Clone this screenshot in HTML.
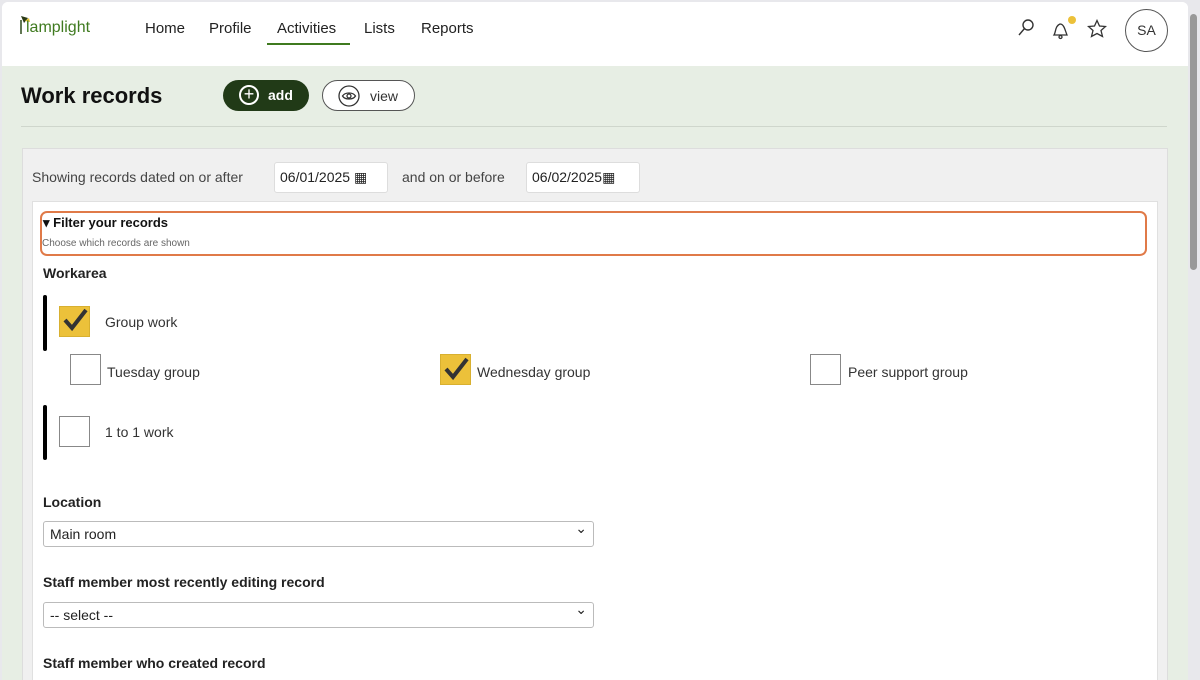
<!DOCTYPE html>
<html><head><style>
*{box-sizing:border-box;margin:0;padding:0}
html,body{width:1200px;height:680px;overflow:hidden}
body{background:#e8e8ec;font-family:"Liberation Sans",sans-serif;position:relative;color:#222}
.frame{position:absolute;left:2px;top:2px;width:1186px;height:678px;background:#fff;border-radius:6px 6px 0 0;overflow:hidden}
.nav{height:64px;position:relative;background:#fff}
.nav a{position:absolute;top:18px;font-size:15px;color:#222;text-decoration:none}
.green{position:absolute;top:64px;left:0;width:1186px;height:614px;background:#e7eee4;overflow:hidden}
.abs{position:absolute}
.panel{position:absolute;left:20px;top:82px;width:1146px;height:560px;background:#f0f0f0;border:1px solid #ddd}
.inner{position:absolute;left:9px;top:52px;width:1126px;height:520px;background:#fff;border:1px solid #e0e0e0}
.cb{position:absolute;width:31px;height:31px;border:1px solid #888;background:#fff}
.cb.on{background:#ecc13a;border-color:#d8b030}
.lbl{position:absolute;font-size:14px;color:#333}
.bar{position:absolute;width:4px;background:#000;border-radius:2px}
.sel{position:absolute;left:10px;width:551px;height:26px;border:1px solid #bbb;border-radius:3px;font-size:14px;padding:4px 6px;color:#222;background:#fff}
.sel:after{content:"⌄";position:absolute;right:6px;top:-2px;font-size:14px}
.h{position:absolute;font-size:14px;font-weight:bold;color:#222}
.date{position:absolute;top:13px;height:31px;background:#fff;border:1px solid #ddd;border-radius:3px;font-size:14px;padding:6px 5px;color:#222}
</style></head><body>
<div class="frame">
<div class="nav">
 <svg class="abs" style="left:16px;top:12px" width="16" height="22" viewBox="0 0 16 22"><path d="M3 6 L3 20" stroke="#2f4a1a" stroke-width="1.5"/><path d="M3 2 L10 4 L6 9 Z" fill="#2a3a15"/><path d="M7 7 L11 4 L12 8 Z" fill="#e8c531"/></svg>
 <div class="abs" style="left:24px;top:17px;font-size:16px;color:#3f7a1f">lamplight</div>
 <a style="left:143px">Home</a><a style="left:207px">Profile</a><a style="left:275px">Activities</a><a style="left:362px">Lists</a><a style="left:419px">Reports</a>
 <div class="abs" style="left:265px;top:41px;width:83px;height:2px;background:#3f7a1f"></div>
 <svg class="abs" style="left:1014px;top:16px" width="20" height="20" viewBox="0 0 20 20" fill="none" stroke="#333" stroke-width="1.4"><circle cx="12" cy="7" r="5"/><path d="M8.5 10.5 L3 17"/></svg>
 <svg class="abs" style="left:1048px;top:16px" width="24" height="22" viewBox="0 0 24 22" fill="none" stroke="#333" stroke-width="1.3"><path d="M4 17 C6 14 5 8 10 6 C14 6 15 12 17 17 Z"/><circle cx="10.5" cy="19" r="1.5"/></svg>
 <div class="abs" style="left:1066px;top:14px;width:8px;height:8px;border-radius:50%;background:#ecc13a"></div>
 <svg class="abs" style="left:1085px;top:17px" width="20" height="19" viewBox="0 0 20 19" fill="none" stroke="#333" stroke-width="1.3"><path d="M10 1.5 L12.5 7 L18.5 7.5 L14 11.5 L15.5 17.5 L10 14.5 L4.5 17.5 L6 11.5 L1.5 7.5 L7.5 7 Z"/></svg>
 <div class="abs" style="left:1123px;top:7px;width:43px;height:43px;border:1px solid #555;border-radius:50%;font-size:14px;text-align:center;line-height:41px;color:#333">SA</div>
</div>
<div class="green">
 <div class="abs" style="left:19px;top:17px;font-size:22px;font-weight:bold;color:#111">Work records</div>
 <div class="abs" style="left:221px;top:14px;width:86px;height:31px;background:#213a17;border-radius:16px;color:#fff;font-size:14px;font-weight:bold;padding:7px 0 0 45px">add</div>
 <div class="abs" style="left:237px;top:19px;width:20px;height:20px;border:2px solid #fff;border-radius:50%;color:#fff;text-align:center;line-height:15px;font-size:18px">+</div>
 <div class="abs" style="left:320px;top:14px;width:93px;height:31px;background:#fff;border:1px solid #555;border-radius:16px;font-size:14px;color:#333;padding:7px 0 0 47px">view</div>
 <svg class="abs" style="left:336px;top:19px" width="22" height="22" viewBox="0 0 22 22" fill="none" stroke="#333" stroke-width="1.3"><circle cx="11" cy="11" r="10"/><path d="M4.5 11 C7 7 15 7 17.5 11 C15 15 7 15 4.5 11Z"/><circle cx="11" cy="11" r="2"/></svg>
 <div class="abs" style="left:19px;top:60px;width:1146px;height:1px;background:#cfd6cc"></div>
 <div class="panel">
  <div class="abs" style="left:9px;top:20px;font-size:14px;color:#444">Showing records dated on or after</div>
  <div class="date" style="left:251px;width:114px">06/01/2025 ▦</div>
  <div class="abs" style="left:379px;top:20px;font-size:14px;color:#444">and on or before</div>
  <div class="date" style="left:503px;width:114px">06/02/2025▦</div>
  <div class="inner">
   <div class="abs" style="left:7px;top:9px;width:1107px;height:45px;border:2px solid #e07a48;border-radius:7px"></div>
   <div class="abs" style="left:10px;top:13px;font-size:13px;font-weight:bold;color:#111">▾ Filter your records</div>
   <div class="abs" style="left:9px;top:36px;font-size:10px;color:#666">Choose which records are shown</div>
   <div class="h" style="left:10px;top:63px">Workarea</div>
   <div class="bar" style="left:10px;top:93px;height:56px"></div>
   <div class="cb on" style="left:26px;top:104px"></div>
   <div class="lbl" style="left:72px;top:112px">Group work</div>
   <div class="cb" style="left:37px;top:152px"></div><div class="lbl" style="left:74px;top:162px">Tuesday group</div>
   <div class="cb on" style="left:407px;top:152px"></div><div class="lbl" style="left:444px;top:162px">Wednesday group</div>
   <div class="cb" style="left:777px;top:152px"></div><div class="lbl" style="left:815px;top:162px">Peer support group</div>
   <div class="bar" style="left:10px;top:203px;height:55px"></div>
   <div class="cb" style="left:26px;top:214px"></div><div class="lbl" style="left:72px;top:222px">1 to 1 work</div>
   <div class="h" style="left:10px;top:292px">Location</div>
   <div class="sel" style="top:319px">Main room</div>
   <div class="h" style="left:10px;top:372px">Staff member most recently editing record</div>
   <div class="sel" style="top:400px">-- select --</div>
   <div class="h" style="left:10px;top:453px">Staff member who created record</div>
  </div>
 </div>
</div>
</div>
<svg style="position:absolute;left:61px;top:307px" width="30" height="26" viewBox="0 0 30 26"><path d="M4 13 L11 21 L25 3" fill="none" stroke="#333" stroke-width="4"/></svg>
<svg style="position:absolute;left:442px;top:356px" width="30" height="26" viewBox="0 0 30 26"><path d="M4 13 L11 21 L25 3" fill="none" stroke="#333" stroke-width="4"/></svg>
<div style="position:absolute;left:1190px;top:14px;width:7px;height:256px;background:#999;border-radius:4px"></div>
</body></html>
